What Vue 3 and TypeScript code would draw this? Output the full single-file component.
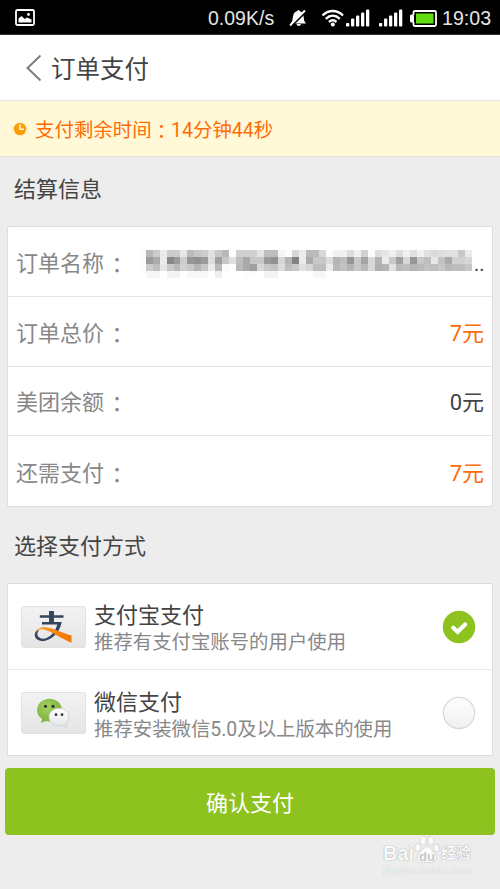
<script setup lang="ts">
interface OrderRow { label: string; value: string; tone: string }
interface Cell { x: number; y: number; fill: string }

const rows: OrderRow[] = [
  { label: '订单总价', value: '7元', tone: 'orange' },
  { label: '美团余额', value: '0元', tone: 'dark' },
  { label: '还需支付', value: '7元', tone: 'orange' },
]

// Grey levels of the masked order name, one row of tiles per line
const levels: number[][] = [
  [184,204,235,204,204,230,187,200,205,225,200,184,255,208,208,208,228,190,190,245,252,215,235,185,186,215,253,240,240,220,240,210,253,222,230,240,222,240,225,240,225,218,222,225,225,200,235],
  [155,172,235,135,155,205,150,145,155,220,160,200,225,190,170,200,200,155,145,215,180,130,235,170,200,200,220,180,190,150,200,165,215,180,235,200,160,215,150,200,190,230,195,170,210,210,215],
  [205,190,230,200,185,210,200,180,200,235,185,250,254,185,170,160,215,200,195,220,190,200,225,215,190,190,235,185,195,180,200,185,215,175,180,225,185,190,180,185,195,190,200,185,190,190,200],
  [246,246,255,243,243,254,247,247,247,255,238,255,255,255,252,252,255,244,244,255,255,255,255,255,247,247],
]
const tile = 6.95
const cells: Cell[] = levels.flatMap((line, r) =>
  line.map((v, c) => ({ x: 5.7 + c * tile, y: r * 7, fill: `rgb(${v},${v},${v})` })),
)
const bars: number[] = [5, 8, 11, 14, 17]
</script>

<template>
  <div class="page">
    <div class="status">
      <svg class="pic" width="20" height="17" viewBox="0 0 20 17">
        <rect x="1" y="1" width="18" height="15" rx="1.5" fill="none" stroke="#fff" stroke-width="1.8" />
        <path d="M3.500 13.500V9.500l3-2.500 3.200 3 2.300-1.500 4.500 2v3z" fill="#fff" />
        <circle cx="13.500" cy="5.500" r="1.400" fill="#fff" />
      </svg>
      <span class="speed">0.09K/s</span>
      <svg class="bell" width="18" height="18" viewBox="0 0 18 18">
        <path d="M1.500 14.500c2-2 2-4 2.500-7C4.500 4 6.500 2.400 8.500 2.100c0-1.500 2-1.500 2 0 2.200.5 4 2.800 4.200 5.900.2 3 .5 4.500 2.300 6.500z" fill="#fff" />
        <path d="M7.500 15h4.500c-.5 2.500-4 2.500-4.500 0z" fill="#fff" />
        <path d="M2.500 17 17.500 2" stroke="#000" stroke-width="2" />
        <path d="M1 16.500 16 1.500" stroke="#fff" stroke-width="2" />
      </svg>
      <svg class="wifi" width="24" height="18" viewBox="0 0 24 18">
        <g fill="none" stroke="#fff" stroke-width="2.400">
          <path d="M1.500 6.500C7.500.5 16 .5 22 6.500" />
          <path d="M4.800 9.800c4.300-4 9.700-4 14 0" />
          <path d="M8 13c2.500-2.200 5-2.200 7.500 0" />
        </g>
        <circle cx="11.800" cy="15.500" r="2" fill="#fff" />
      </svg>
      <svg class="signal one" width="24" height="18" viewBox="0 0 24 18">
        <rect v-for="(h, i) in bars" :key="i" :x="i * 5" :y="17.500 - (i ? h : 3.500)" width="3.300" :height="i ? h : 3.500" rx="1" fill="#fff" />
      </svg>
      <svg class="signal two" width="24" height="18" viewBox="0 0 24 18">
        <rect v-for="(h, i) in bars" :key="i" :x="i * 5" :y="17.500 - (i ? h : 3.500)" width="3.300" :height="i ? h : 3.500" rx="1" fill="#fff" />
      </svg>
      <svg class="battery" width="27" height="17" viewBox="0 0 27 17">
        <path d="M3.500 5V2.500Q3.500 1 5 1h19.500Q26 1 26 2.500v12q0 1.500-1.500 1.500H5q-1.500 0-1.500-1.500V12" fill="none" stroke="#fff" stroke-width="1.800" />
        <rect x="0" y="4.500" width="4" height="8" rx="1.500" fill="#fff" />
        <rect x="6" y="3.500" width="17.500" height="10" fill="#62dd14" />
      </svg>
      <span class="clock">19:03</span>
    </div>

    <header class="header">
      <svg class="back" width="16" height="28" viewBox="0 0 16 28">
        <path d="M14.500 1.500 1.500 14l13 12.500" fill="none" stroke="#777" stroke-width="1.800" />
      </svg>
      <h1>订单支付</h1>
    </header>

    <div class="banner">
      <svg width="14" height="14" viewBox="0 0 14 14">
        <circle cx="7" cy="7" r="6.300" fill="#ff9f08" />
        <path d="M7 2.500V7.300h4" fill="none" stroke="#fff8d8" stroke-width="1.500" />
      </svg>
      <span>支付剩余时间<span class="colon">：</span>14分钟44秒</span>
    </div>

    <h2 class="section first">结算信息</h2>
    <div class="card">
      <div class="row">
        <span class="label">订单名称<span class="colon">：</span></span>
        <div class="masked">
          <svg width="334" height="28" viewBox="0 0 334 28" shape-rendering="crispEdges">
            <rect x="0" y="0" width="6" height="24" fill="#fcfcfc" />
            <rect v-for="(c, i) in cells" :key="i" :x="c.x" :y="c.y" width="7" height="7" :fill="c.fill" />
          </svg>
          <span>..</span>
        </div>
      </div>
      <div v-for="row in rows" :key="row.label" class="row">
        <span class="label">{{ row.label }}<span class="colon">：</span></span>
        <span class="value" :class="row.tone">{{ row.value }}</span>
      </div>
    </div>

    <h2 class="section second">选择支付方式</h2>
    <div class="card methods">
      <div class="method">
        <div class="logo">
          <svg width="64" height="42" viewBox="0 0 64 42">
            <defs>
              <linearGradient id="swoosh" x1="0" x2="1"><stop offset="0" stop-color="#ff9d20" /><stop offset="1" stop-color="#f27500" /></linearGradient>
            </defs>
            <path d="M18.800 9.300h9.200V5h5v4.300h9.500v2.500H33v4.300h7.800c-1.300 6-4 10.500-7.800 14-5.500 5-12 6.300-16 4-4-2.300-4.300-7-1-10l2 .5c-2.500 2.500-2 6 1.200 7.500 3 1.400 7.500.1 11-3.200 3-2.700 5-6 6-10.300H21v-2.500h7v-4.300h-9.200z" fill="#34465e" />
            <path d="M14 28c1-5 5.500-7.300 10.500-6.800 7.500.8 17 6 26 8.200v7.300C40.500 33 31 25.500 23.500 23.500 19 22.500 15.500 24 14 28z" fill="url(#swoosh)" />
          </svg>
        </div>
        <div class="desc"><h3>支付宝支付</h3><p>推荐有支付宝账号的用户使用</p></div>
        <svg class="radio" width="34" height="34" viewBox="0 0 34 34">
          <circle cx="17" cy="17" r="16.200" fill="#8dc21f" />
          <path d="m11.300 17.800 4.300 4 7.500-7.300" fill="none" stroke="#fff" stroke-width="4.200" stroke-linecap="round" />
        </svg>
      </div>
      <div class="method">
        <div class="logo">
          <svg width="64" height="42" viewBox="0 0 64 42">
            <defs>
              <radialGradient id="leaf" cx=".4" cy=".35"><stop offset="0" stop-color="#a3d360" /><stop offset="1" stop-color="#83b843" /></radialGradient>
              <linearGradient id="cloud" x2="0" y2="1"><stop offset="0" stop-color="#fff" /><stop offset="1" stop-color="#e2e6e7" /></linearGradient>
            </defs>
            <path d="M28.500 6.700c7 0 12.500 5 12.500 11.500S35.500 29.500 28.500 29.500c-1.200 0-2.500-.2-3.500-.5l-5 2 1-4.200c-3-2-5-5-5-8.600 0-6.500 5.500-11.500 12.500-11.500z" fill="url(#leaf)" />
            <path d="M38 16.300c5.800 0 10 3.700 10 8.700 0 3-1.500 5.200-3.500 6.700l.8 3.300-4-1.700c-1 .2-2.200.4-3.300.4-5.800 0-10-3.900-10-8.700s4.200-8.700 10-8.700z" fill="url(#cloud)" stroke="#c5caca" stroke-width=".7" />
            <circle cx="24.500" cy="14.300" r="1.600" fill="#333" /><circle cx="32" cy="14.300" r="1.600" fill="#333" />
            <circle cx="35" cy="22.700" r="1.400" fill="#333" /><circle cx="41" cy="22.700" r="1.400" fill="#333" />
          </svg>
        </div>
        <div class="desc"><h3>微信支付</h3><p>推荐安装微信5.0及以上版本的使用</p></div>
        <svg class="radio" width="34" height="34" viewBox="0 0 34 34">
          <defs><linearGradient id="off" x2="0" y2="1"><stop offset="0" stop-color="#fefefe" /><stop offset="1" stop-color="#f0f0f0" /></linearGradient></defs>
          <circle cx="17" cy="17" r="15.600" fill="url(#off)" stroke="#d8d8d8" stroke-width="1.200" />
        </svg>
      </div>
    </div>

    <button class="confirm">确认支付</button>

    <div class="mark">
      <div class="mark-top">
        <span class="bai">Bai</span>
        <svg width="26" height="29" viewBox="0 0 26 29">
          <g fill="#fafafa" stroke="#d2d2d2" stroke-width=".9">
            <ellipse cx="3.700" cy="12.500" rx="3" ry="4" /><ellipse cx="9.200" cy="5.500" rx="3" ry="4.300" />
            <ellipse cx="17" cy="5.700" rx="3" ry="4.300" /><ellipse cx="22.400" cy="13" rx="3" ry="4" />
            <path d="M13 11.500c4 0 4.500 3.800 7.500 6.500 4.500 4 1.500 10-4 9.500-2.500-.3-4.500-.3-7 0-6 .7-8.500-5-4-9.500 3-3 3.500-6.500 7.500-6.500z" />
          </g>
          <text x="13" y="25.500" text-anchor="middle" class="du">du</text>
        </svg>
        <span class="jy">经验</span>
      </div>
      <div class="site">jingyan.baidu.com</div>
    </div>
  </div>
</template>

<style>
body { margin: 0; background: #ededed; }
</style>

<style scoped>
.page { position: relative; width: 500px; height: 889px; overflow: hidden; background: #ededed; color: #444; font-family: Roboto, "Noto Sans CJK SC", sans-serif; }
h1, h2, h3, p { margin: 0; font-weight: 400; }
.colon { display: inline-block; line-height: 1; transform: translateY(1.5px); font-family: "Noto Sans CJK TC", sans-serif; }
.status { display: flex; align-items: center; box-sizing: border-box; height: 35px; padding: 0 8px 0 15px; background: #000; color: #e4e4e4; font-size: 20px; line-height: 35px; white-space: nowrap; border-bottom: 1px solid #333; }
.status svg { flex: none; }
.status .bell, .status .wifi, .status .signal, .status .battery { margin-top: 2px; }
.speed { width: 67px; margin-left: 173px; padding-top: 2px; font-family: "Liberation Sans", sans-serif; font-size: 19.5px; }
.bell { margin-left: 14px; }
.wifi { margin-left: 14px; }
.signal.one { margin-left: 1px; }
.signal.two { margin-left: 9px; }
.battery { margin-left: 7px; }
.clock { margin-left: 5px; padding-top: 3px; font-family: "Liberation Sans", sans-serif; font-size: 19.6px; }
.header { display: flex; align-items: center; box-sizing: border-box; height: 66px; padding: 0 26px; background: #fff; border-bottom: 1px solid #e6e6e6; }
.header h1 { margin-left: 9px; padding-top: 4px; font-size: 24.500px; line-height: 60px; }
.banner { display: flex; align-items: center; box-sizing: border-box; height: 56px; padding-left: 13px; border-bottom: 1px solid #e5e3d4; background: #fff9d8; color: #ff6c05; font-size: 19.450px; line-height: 52px; }
.banner > span { margin-left: 8px; padding-top: 4px; }
.section { box-sizing: border-box; padding-left: 14px; font-size: 22px; }
.section.first { height: 69px; line-height: 66px; }
.section.second { height: 76px; line-height: 80px; }
.card { box-sizing: border-box; margin: 0 7px; border: 1px solid #dcdcdc; border-radius: 2px; background: #fff; }
.row { display: flex; align-items: center; justify-content: space-between; box-sizing: border-box; height: 69.750px; padding: 0 8px; border-bottom: 1px solid #e4e4e4; font-size: 22px; line-height: 64px; }
.row:last-child, .method:last-child { border-bottom: 0; }
.label, .value { padding-top: 5px; }
.label { color: #888; }
.label .colon { margin-left: 2px; }
.orange { color: #ff6c05; }
.masked { display: flex; align-items: center; margin-right: -1px; padding-top: 5px; font-size: 20px; }
.masked span { width: 11px; }
.methods { height: 173px; }
.method { display: flex; align-items: center; box-sizing: border-box; height: 86px; padding: 0 16px 0 13px; border-bottom: 1px solid #e8e8e8; }
.logo { box-sizing: border-box; width: 65px; height: 42px; border: 1px solid #e2e1e2; border-radius: 3px; background: linear-gradient(#f3f2f3, #e6e5e6); }
.logo svg { display: block; margin: -1px; }
.desc { flex: 1; margin-left: 8px; padding-top: 5px; white-space: nowrap; }
.desc h3 { font-size: 22px; line-height: 28px; }
.desc p { color: #888; font-size: 19.400px; line-height: 26px; }
.confirm { display: block; width: 490px; height: 67px; margin: 12px 0 0 5px; padding: 4px 0 0; border: 0; border-radius: 4px; background: #8dc21f; color: #fff; font: 22px/63px Roboto, "Noto Sans CJK SC", sans-serif; }
.mark { position: absolute; left: 383px; top: 835px; width: 92px; color: #fafafa; text-shadow: 0 0 1px #999, 0 0 1px #bbb; }
.mark-top { display: flex; align-items: flex-end; height: 29px; white-space: nowrap; }
.mark-top svg { flex: none; }
.bai { width: 31px; font: bold 20px/22px "Liberation Sans", sans-serif; }
.jy { margin-left: 1px; font-size: 15px; line-height: 22px; font-weight: 700; }
.du { fill: #c9c9c9; font: bold 13px "Liberation Sans", sans-serif; text-shadow: none; }
.site { margin-top: -1px; font: 11px/15px "Liberation Sans", sans-serif; color: #f5f5f5; text-shadow: 0 0 1px #bbb; }
</style>
